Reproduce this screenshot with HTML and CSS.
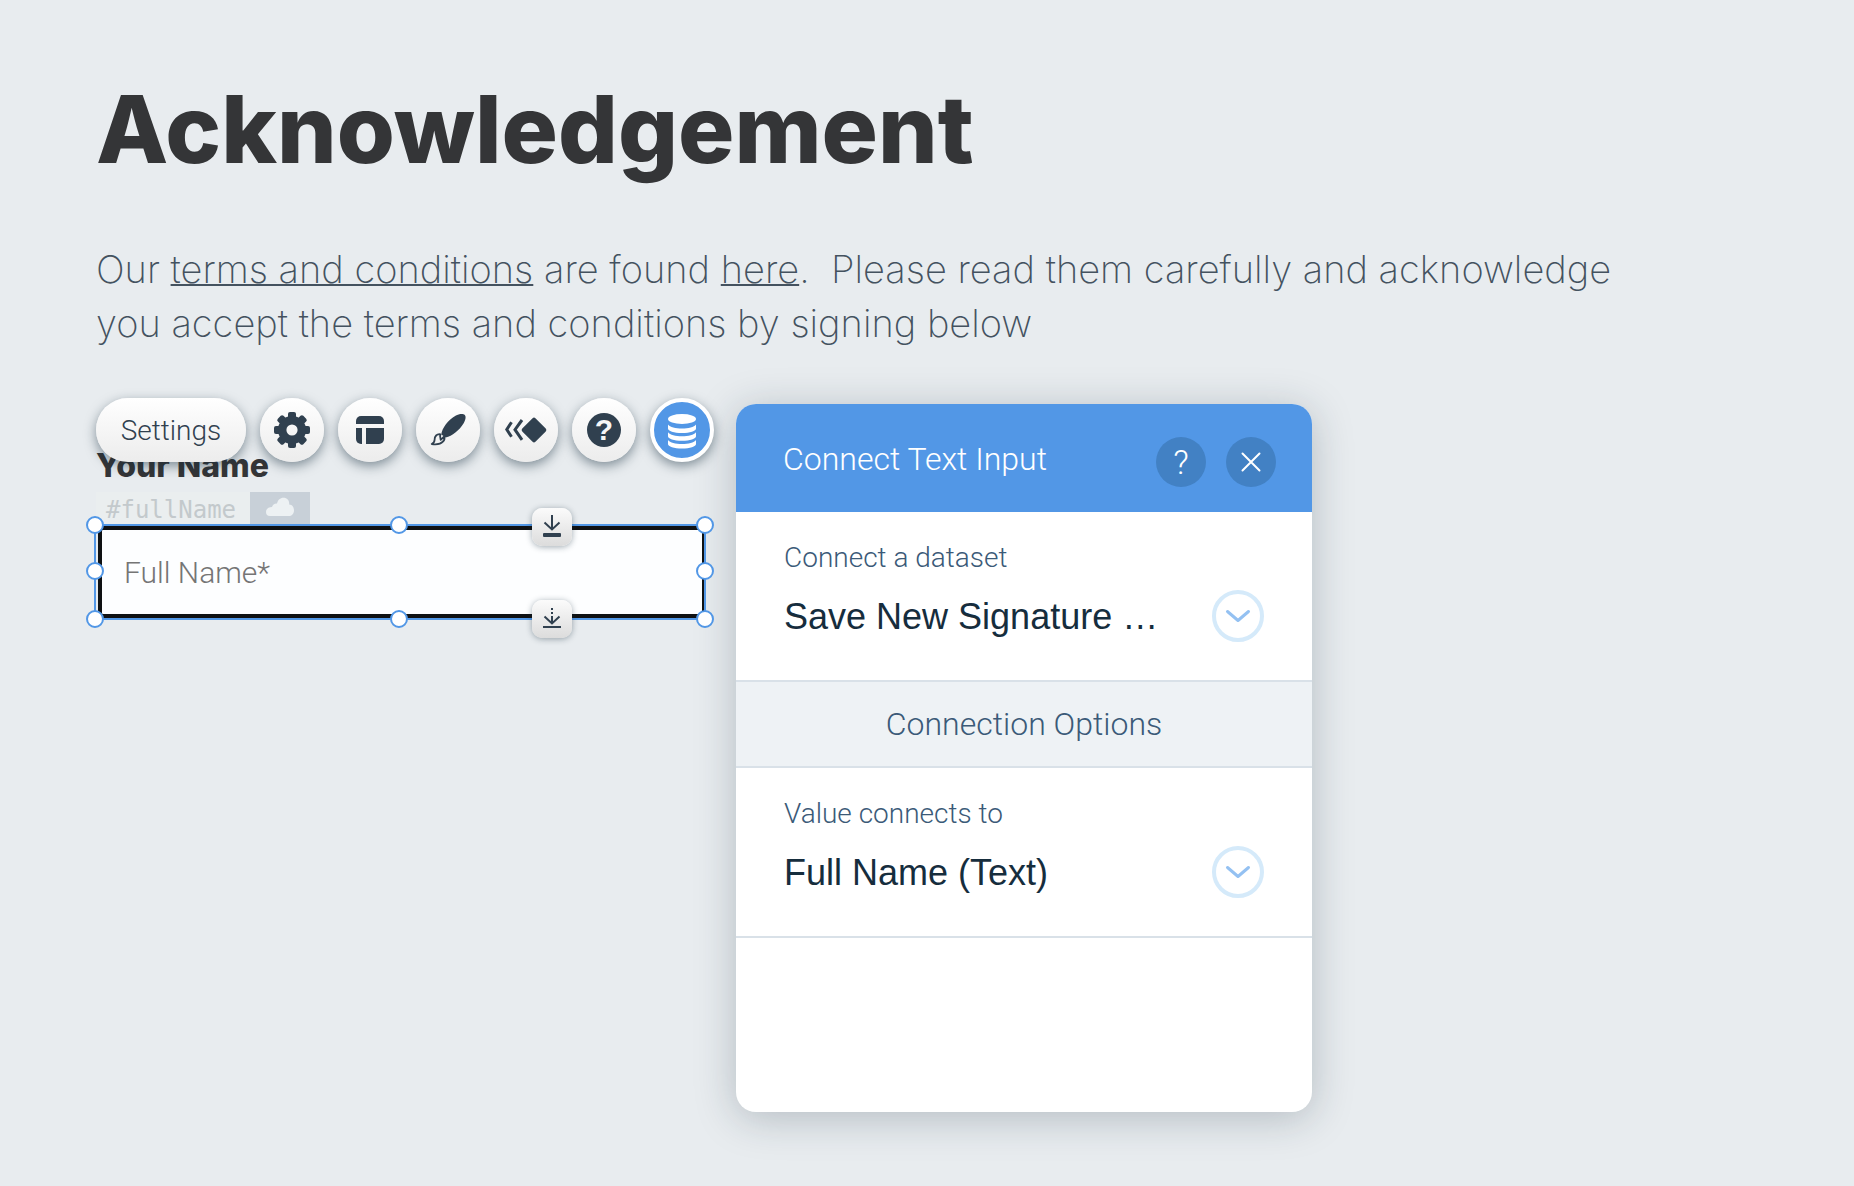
FILE: index.html
```html
<!DOCTYPE html>
<html lang="en">
<head>
    <meta charset="UTF-8">
    <meta name="viewport" content="width=device-width, initial-scale=1.0">
    <title>Acknowledgement</title>
    <link rel="stylesheet" href="styles.css">
</head>
<body>

    <main class="page">
        <h1>Acknowledgement</h1>
        <p class="intro">Our <a href="#">terms and conditions</a> are found <a href="#">here</a>.&nbsp; Please read them carefully and acknowledge<br>you accept the terms and conditions by signing below</p>

        <div class="editor">
            <section class="stage">
                <!-- Floating toolbar -->
                <div class="toolbar">
                    <button class="tool tool-settings">Settings</button>
                    <button class="tool" aria-label="Preferences">
                        <svg viewBox="0 0 64 64">
                            <g fill="#30404f">
                                <rect x="28" y="14" width="8" height="10" rx="2"/>
                                <rect x="28" y="14" width="8" height="10" rx="2" transform="rotate(45 32 32)"/>
                                <rect x="28" y="14" width="8" height="10" rx="2" transform="rotate(90 32 32)"/>
                                <rect x="28" y="14" width="8" height="10" rx="2" transform="rotate(135 32 32)"/>
                                <rect x="28" y="14" width="8" height="10" rx="2" transform="rotate(180 32 32)"/>
                                <rect x="28" y="14" width="8" height="10" rx="2" transform="rotate(225 32 32)"/>
                                <rect x="28" y="14" width="8" height="10" rx="2" transform="rotate(270 32 32)"/>
                                <rect x="28" y="14" width="8" height="10" rx="2" transform="rotate(315 32 32)"/>
                            </g>
                            <circle cx="32" cy="32" r="9.8" fill="none" stroke="#30404f" stroke-width="8.4"/>
                        </svg>
                    </button>
                    <button class="tool" aria-label="Layout">
                        <svg viewBox="0 0 64 64" fill="#30404f">
                            <path d="M18 26v-3a5 5 0 0 1 5-5h18a5 5 0 0 1 5 5v3z"/>
                            <path d="M18 30h6v16h-1a5 5 0 0 1-5-5z"/>
                            <path d="M28 30h18v11a5 5 0 0 1-5 5H28z"/>
                        </svg>
                    </button>
                    <button class="tool" aria-label="Design">
                        <svg viewBox="0 0 64 64">
                            <path d="M25.300 36.500c.5-6 7-15 14.200-18.800 3.800-2 7.700-2.300 9.300-.6 1.500 1.700 .7 5.300-1.300 8.500-4.300 7-11.300 12.500-17.800 14z" fill="#30404f"/>
                            <path d="M24.500 36.300c-3.700-.6-6 2-5.900 5.500 0 2-.7 3.200-2.900 4.200 4.800 .7 9.300-.2 11.200-2.300 1.500-1.600 2-3.500 1.300-5.200l-3.500 3.300-.6-3.700z" fill="none" stroke="#30404f" stroke-width="1.800" stroke-linejoin="round"/>
                        </svg>
                    </button>
                    <button class="tool" aria-label="Animation">
                        <svg viewBox="0 0 64 64">
                            <rect x="30.700" y="22.700" width="18.600" height="18.600" rx="2" transform="rotate(45 40 32)" fill="#30404f"/>
                            <path d="M17.500 24.300L12.800 31.500L17.500 38.700M28 22L21 31.700L28 41.800" fill="none" stroke="#30404f" stroke-width="3"/>
                        </svg>
                    </button>
                    <button class="tool" aria-label="Help"><span class="help-dot">?</span></button>
                    <button class="tool tool-active" aria-label="Connect to data">
                        <svg viewBox="0 0 64 64" fill="#fff">
                            <ellipse cx="32" cy="21" rx="14" ry="5"/>
                            <path id="disc" d="M18 26.500c2 2.600 7.500 4 14 4s12-1.400 14-4v4c0 2.500-6 4.500-14 4.500s-14-2-14-4.500z"/>
                            <use href="#disc" y="7.700"/>
                            <use href="#disc" y="15.400"/>
                        </svg>
                    </button>
                </div>

                <label class="field-label" for="fullName">Your Name</label>

                <div class="tag">
                    <span class="tag-id">#fullName</span>
                    <span class="tag-cloud">
                        <svg viewBox="0 0 60 32" fill="#edf1f3"><path d="M20 24a4 4 0 0 1-4-4c0-3 2.500-5 6-5 .5-2 2.500-3.700 5-3.500C28 8 30 5.800 33.500 5.800c3.800 0 6 2.700 5.700 6.700C42.500 12.700 44 15.500 44 18.500 44 22 41.500 24 39 24z"/></svg>
                    </span>
                </div>

                <!-- Selected element with resize handles -->
                <div class="selection">
                    <input type="text" id="fullName" placeholder="Full Name*">
                    <span class="handle top left"></span>
                    <span class="handle top center"></span>
                    <span class="handle top right"></span>
                    <span class="handle middle left"></span>
                    <span class="handle middle right"></span>
                    <span class="handle bottom left"></span>
                    <span class="handle bottom center"></span>
                    <span class="handle bottom right"></span>
                    <button class="snap snap-top" aria-label="Push down">
                        <svg viewBox="0 0 40 38"><path d="M20 7v14M12.500 14.500L20 21.500L27.500 14.500" fill="none" stroke="#30404f" stroke-width="2"/><rect x="11" y="25" width="18" height="4" rx="1" fill="#30404f"/></svg>
                    </button>
                    <button class="snap snap-bottom" aria-label="Stretch down">
                        <svg viewBox="0 0 40 38"><path d="M20 8v2M20 12v2M20 16v7M12.500 16.500L20 23.500L27.500 16.500M11 27h18" fill="none" stroke="#30404f" stroke-width="2"/></svg>
                    </button>
                </div>
            </section>

            <!-- Connection panel -->
            <section class="panel">
                <header class="panel-header">
                    <h2>Connect Text Input</h2>
                    <button class="round" aria-label="Help">?</button>
                    <button class="round" aria-label="Close">
                        <svg viewBox="0 0 50 50"><path d="M16.500 16.500L33.500 33.500M33.500 16.500L16.500 33.500" stroke="#fff" stroke-width="2" stroke-linecap="round"/></svg>
                    </button>
                </header>
                <div class="option">
                    <label for="dataset">Connect a dataset</label>
                    <div class="picker">
                        <select id="dataset"><option>Save New Signature …</option></select>
                        <span class="arrow"><svg viewBox="0 0 44 44"><path d="M11.500 17.500L22 26.500L32.500 17.500" fill="none" stroke="#94c1f2" stroke-width="3" stroke-linecap="round" stroke-linejoin="round"/></svg></span>
                    </div>
                </div>
                <h3>Connection Options</h3>
                <div class="option">
                    <label for="value">Value connects to</label>
                    <div class="picker">
                        <select id="value"><option>Full Name (Text)</option></select>
                        <span class="arrow"><svg viewBox="0 0 44 44"><path d="M11.500 17.500L22 26.500L32.500 17.500" fill="none" stroke="#94c1f2" stroke-width="3" stroke-linecap="round" stroke-linejoin="round"/></svg></span>
                    </div>
                </div>
            </section>
        </div>
    </main>

</body>
</html>
```
FILE: styles.css
```css
* {
    box-sizing: border-box;
}

body {
    margin: 0;
    background-color: #e8ecef;
    font-family: Roboto, "Liberation Sans", sans-serif;
    font-weight: 300;
}

button, input, select {
    font-family: inherit;
    font-weight: inherit;
    margin: 0;
    padding: 0;
    border: none;
}

button {
    cursor: pointer;
}

svg {
    display: block;
    width: 100%;
    height: 100%;
}

.page {
    padding: 76px 96px 72px;
}

h1 {
    margin: 0;
    font-family: Inter, sans-serif;
    font-size: 94px;
    font-weight: 800;
    line-height: 106px;
    color: #343537;
}

.intro {
    margin: 60px 0 0;
    font-family: Inter, sans-serif;
    font-size: 38px;
    font-weight: 200;
    line-height: 54px;
    white-space: nowrap;
    color: #44525f;
}

.intro a {
    color: inherit;
    text-decoration-thickness: 2px;
}

.editor {
    display: flex;
    align-items: flex-start;
    gap: 22px;
    margin-top: 48px;
}

.stage {
    width: 618px;
}

/* Toolbar */
.toolbar {
    position: relative;
    z-index: 1;
    display: flex;
    gap: 14px;
}

.tool {
    flex: none;
    width: 64px;
    height: 64px;
    border-radius: 32px;
    background: linear-gradient(#ffffff, #ececec);
    box-shadow: 0 4px 12px rgba(22, 45, 61, 0.5);
    color: #30404f;
}

.tool-settings {
    width: 150px;
    font-size: 28px;
}

.tool-active {
    border: 4px solid #fff;
    background: #5297e6;
}

.tool-active svg {
    width: 64px;
    height: 64px;
    margin: -4px;
}

.help-dot {
    display: block;
    width: 34px;
    height: 34px;
    margin: 0 auto;
    border-radius: 50%;
    background-color: #30404f;
    color: #f6f6f6;
    font-family: "Liberation Sans", sans-serif;
    font-size: 30px;
    font-weight: 700;
    line-height: 34px;
}

/* Text field */
.field-label {
    display: block;
    margin-top: -16px;
    font-family: Inter, sans-serif;
    font-size: 32px;
    font-weight: 800;
    line-height: 40px;
    color: #343537;
}

.tag {
    display: flex;
    width: 214px;
    height: 32px;
    margin-top: 6px;
    background-color: #eaeeef;
}

.tag-id {
    width: 154px;
    padding-left: 10px;
    font-family: "DejaVu Sans Mono", monospace;
    font-size: 24px;
    font-weight: 400;
    line-height: 36px;
    color: #c3c9cc;
}

.tag-cloud {
    width: 60px;
    background-color: #c8d0d8;
}

.selection {
    position: relative;
    width: 612px;
    height: 96px;
    margin-left: -2px;
    padding-left: 2px;
    border: 2px solid #5297e6;
}

.selection input {
    display: block;
    width: 100%;
    height: 100%;
    padding-left: 22px;
    border: 4px solid #0f1113;
    border-right-width: 2px;
    border-radius: 5px;
    background-color: #fdfeff;
    font-size: 30px;
    color: #333;
}

.selection input::placeholder {
    color: #757575;
}

.handle {
    position: absolute;
    width: 18px;
    height: 18px;
    border: 2px solid #5297e6;
    border-radius: 50%;
    background-color: #fff;
}

.top { top: -10px; }
.middle { top: 36px; }
.bottom { bottom: -10px; }
.left { left: -10px; }
.center { left: 294px; }
.right { right: -10px; }

.snap {
    position: absolute;
    left: 436px;
    width: 40px;
    height: 38px;
    border-radius: 10px;
    background: linear-gradient(#fbfbfb, #dcdcdc);
    box-shadow: 0 1px 6px rgba(22, 45, 61, 0.4);
}

.snap-top {
    top: -18px;
}

.snap-bottom {
    bottom: -20px;
}

/* Panel */
.panel {
    width: 576px;
    min-height: 708px;
    margin-top: 6px;
    border-radius: 20px;
    overflow: hidden;
    background-color: #fff;
    box-shadow: 0 6px 40px rgba(22, 45, 61, 0.25);
}

.panel-header {
    display: flex;
    align-items: center;
    gap: 20px;
    height: 108px;
    padding: 8px 36px 0 47px;
    background-color: #5297e6;
    color: #fff;
}

.panel-header h2 {
    flex: 1;
    margin: 0;
    padding-bottom: 6px;
    font-size: 32px;
    font-weight: 300;
    line-height: 40px;
}

.round {
    width: 50px;
    height: 50px;
    border-radius: 50%;
    background-color: #4281c4;
    color: #fff;
    font-size: 34px;
}

.option {
    height: 170px;
    padding: 26px 48px 0;
    border-bottom: 2px solid #d9e1e8;
}

.option label {
    display: block;
    font-size: 28px;
    line-height: 40px;
    color: #3b5a78;
}

.picker {
    position: relative;
    height: 52px;
    margin-top: 12px;
}

.picker select {
    width: 100%;
    height: 52px;
    appearance: none;
    background: none;
    font-family: "Liberation Sans", sans-serif;
    font-size: 36px;
    font-weight: 400;
    color: #162d3d;
}

.arrow {
    position: absolute;
    top: 0;
    right: 0;
    width: 52px;
    height: 52px;
    border: 4px solid #d5eafa;
    border-radius: 50%;
    pointer-events: none;
}

.panel h3 {
    margin: 0;
    border-bottom: 2px solid #d9e1e8;
    background-color: #eef2f5;
    font-size: 32px;
    font-weight: 300;
    line-height: 84px;
    text-align: center;
    color: #3b5a78;
}
```
